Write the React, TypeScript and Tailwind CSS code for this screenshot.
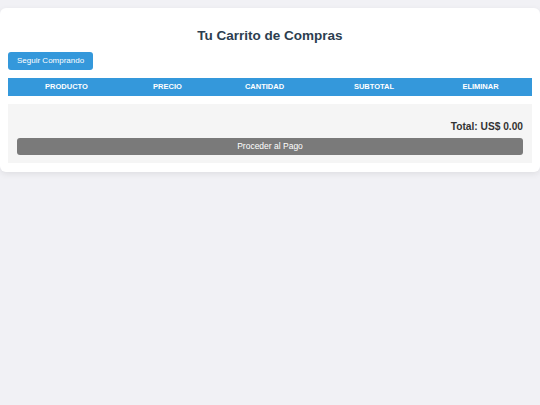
export default function App() {
  const columns = ["Producto", "Precio", "Cantidad", "Subtotal", "Eliminar"];
  return (
    <div
      className="min-h-[405px] w-[540px] bg-[#f1f1f5] pt-[8px]"
      style={{ fontFamily: '"Liberation Sans", Arial, sans-serif' }}
    >
      <div className="rounded-[6px] bg-white px-[8px] pb-[9px] pt-[18px] shadow-[0_2px_6px_rgba(0,0,0,0.08)]">
        <h1 className="text-center text-[13.5px] font-bold leading-[20px] text-[#2c3e50]">
          Tu Carrito de Compras
        </h1>
        <div className="mt-[6px] flex">
          <button className="block h-[18px] rounded-[3px] bg-[#3498db] px-[9px] text-[8px] leading-[18px] text-white">
            Seguir Comprando
          </button>
        </div>
        <div className="mt-[8px] grid h-[18px] grid-cols-[117px_85px_109px_110px_1fr] items-center bg-[#3498db] text-center text-[7.5px] font-bold uppercase text-white">
          {columns.map((c) => (
            <div key={c}>{c}</div>
          ))}
        </div>
        <div className="mt-[8px] flex flex-col bg-[#f5f5f5] px-[9px] pb-[8px] pt-[16px]">
          <div className="text-right text-[10.2px] font-bold leading-[14px] text-[#333333]">
            Total: US$ 0.00
          </div>
          <button className="mt-[4px] block h-[17px] w-full rounded-[3px] bg-[#7a7a7a] text-[8.5px] leading-[17px] text-white">
            Proceder al Pago
          </button>
        </div>
      </div>
    </div>
  );
}
